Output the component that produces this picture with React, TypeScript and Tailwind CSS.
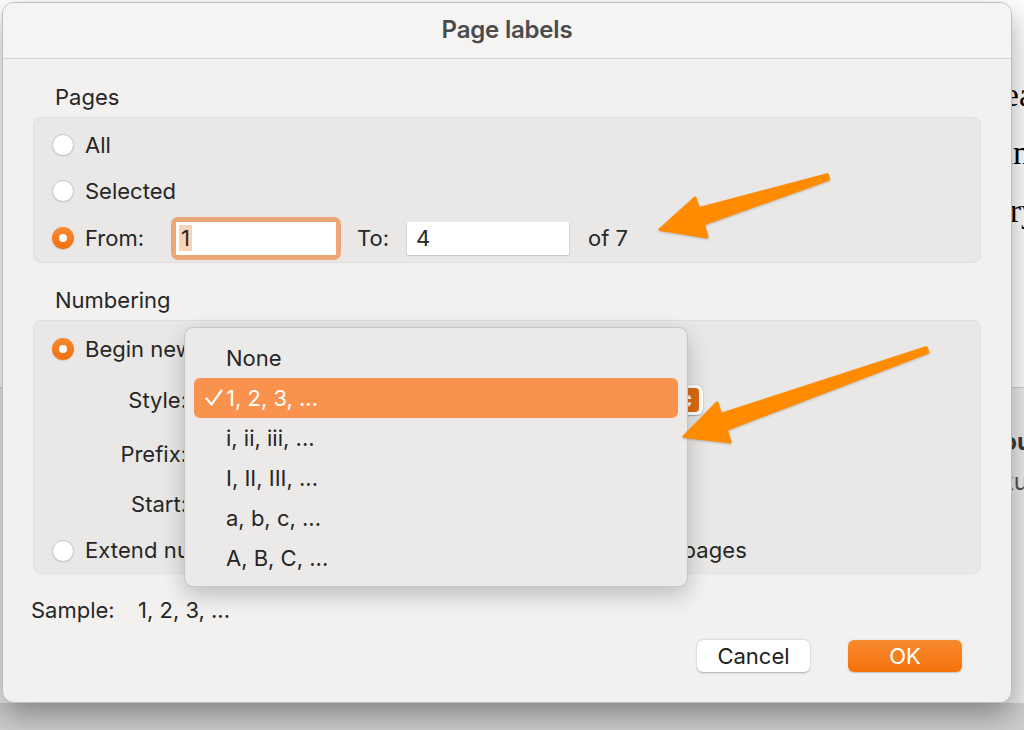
import React from "react";

function Radio({ on }: { on?: boolean }) {
  return on ? (
    <span className="flex h-[22px] w-[22px] shrink-0 items-center justify-center rounded-full bg-linear-to-b from-[#f7892f] to-[#f2700c] shadow-[0_0.5px_1px_rgba(0,0,0,0.25)]">
      <span className="h-[8px] w-[8px] rounded-full bg-white" />
    </span>
  ) : (
    <span className="h-[22px] w-[22px] shrink-0 rounded-full border border-[#c9c9c9] bg-white shadow-[0_0.5px_1px_rgba(0,0,0,0.12)]" />
  );
}

const items = ["None", "1, 2, 3, ...", "i, ii, iii, ...", "I, II, III, ...", "a, b, c, ...", "A, B, C, ..."];

export default function App() {
  return (
    <div className="relative h-[730px] w-[1024px] overflow-hidden bg-[#cdcdcd] text-[22px] text-[#262626] [font-family:Inter,'Noto_Sans',sans-serif]">
      {/* background document */}
      <div className="flex h-full flex-col">
        <div className="flex h-[388px] flex-col items-end border-b border-[#cfcfcf] bg-white pt-[66px] text-[34px] leading-[58px] text-black [font-family:'Liberation_Serif',serif]">
          <span className="mr-[-10px]">lea</span>
          <span className="mr-[-6px]">mn</span>
          <span className="mr-[-14px]">ary</span>
        </div>
        <div className="flex h-[315px] flex-col items-end bg-[#ececec] pt-[34px] text-[24px] font-bold leading-[40px] text-[#3a3a3a]">
          <span className="mr-[-8px]">pou</span>
          <span className="mr-[-4px] font-normal text-[#555]">ku</span>
        </div>
      </div>

      {/* dialog window */}
      <div className="absolute left-[2px] top-[2px] flex h-[701px] w-[1010px] flex-col overflow-hidden rounded-[12px] border border-[#bdbdbd] bg-[#f2f1f0] shadow-[0_12px_30px_rgba(0,0,0,0.35)]">
        <div className="flex h-[56px] shrink-0 items-center justify-center border-b border-[#d5d4d3] bg-[#f5f4f3] pb-[2px]">
          <span className="text-[24px] font-semibold tracking-[-0.2px] text-[#4b4b4b]">Page labels</span>
        </div>

        <div className="flex flex-col px-[30px]">
          <div className="mt-[24px] h-[28px] pl-[22px] leading-[28px]">Pages</div>
          <div className="mt-[6px] flex h-[146px] flex-col rounded-[8px] border border-[#e0dfde] bg-[#e9e8e7] pl-[18px] pt-[4px]">
            <div className="flex h-[46px] items-center gap-[11px]">
              <Radio />
              <span>All</span>
            </div>
            <div className="flex h-[46px] items-center gap-[11px]">
              <Radio />
              <span>Selected</span>
            </div>
            <div className="flex h-[48px] items-center">
              <Radio on />
              <span className="ml-[11px] w-[86px]">From:</span>
              <div className="rounded-[7px] bg-[#efa676] p-[5px]">
                <div className="flex h-[33px] w-[160px] items-center bg-white pl-[3px]">
                  <span className="bg-[#f8d3b8] px-[2px] leading-[26px]">1</span>
                </div>
              </div>
              <span className="ml-[16px] w-[50px]">To:</span>
              <div className="flex h-[33px] w-[162px] items-center bg-white pl-[9px] shadow-[0_0.5px_1.5px_rgba(0,0,0,0.35)]">4</div>
              <span className="ml-[19px]">of 7</span>
            </div>
          </div>

          <div className="mt-[23px] h-[28px] pl-[22px] leading-[28px]">Numbering</div>
          <div className="mt-[6px] flex h-[254px] flex-col rounded-[8px] border border-[#e0dfde] bg-[#e9e8e7] pt-[5px]">
            <div className="flex h-[46px] items-center gap-[11px] pl-[18px]">
              <Radio on />
              <span>Begin new section</span>
            </div>
            <div className="flex h-[56px] items-center">
              <span className="w-[153px] text-right">Style:</span>
              <div className="ml-[9px] flex h-[30px] w-[507px] items-center justify-end rounded-[6px] bg-white pr-[4px] shadow-[0_0.5px_1.5px_rgba(0,0,0,0.3)]">
                <span className="flex h-[24px] w-[19px] flex-col items-center justify-center rounded-[4px] bg-[#dc6a12] text-[9px] leading-[8px] text-white">
                  <span>▴</span>
                  <span>▾</span>
                </span>
              </div>
            </div>
            <div className="flex h-[52px] items-center">
              <span className="w-[153px] text-right">Prefix:</span>
              <div className="ml-[9px] h-[30px] w-[200px] bg-white shadow-[0_0.5px_1.5px_rgba(0,0,0,0.3)]" />
            </div>
            <div className="flex h-[48px] items-center">
              <span className="w-[153px] text-right">Start:</span>
              <div className="ml-[9px] h-[30px] w-[100px] bg-white shadow-[0_0.5px_1.5px_rgba(0,0,0,0.3)]" />
            </div>
            <div className="flex h-[45px] items-center gap-[11px] pl-[18px]">
              <Radio />
              <span className="whitespace-nowrap tracking-[0.1px]">Extend numbering used in preceding section to selected pages</span>
            </div>
          </div>

          <div className="-ml-[2px] mt-[22px] flex h-[28px] items-center">
            <span className="w-[107px]">Sample:</span>
            <span>1, 2, 3, ...</span>
          </div>

          <div className="mt-[16px] flex justify-end gap-[38px] pr-[19px]">
            <button className="flex h-[32px] w-[113px] items-center justify-center rounded-[6px] bg-white text-[#222] shadow-[0_0.5px_2px_rgba(0,0,0,0.3)]">
              Cancel
            </button>
            <button className="flex h-[32px] w-[114px] items-center justify-center rounded-[6px] bg-linear-to-b from-[#f78a2c] to-[#f57207] text-white shadow-[0_0.5px_1.5px_rgba(0,0,0,0.2)]">
              OK
            </button>
          </div>
        </div>
      </div>

      {/* popup menu */}
      <div className="absolute left-[184px] top-[327px] flex h-[260px] w-[504px] flex-col rounded-[9px] border border-[#c6c6c6] bg-[#ebeae9] px-[9px] pt-[10px] shadow-[0_8px_22px_rgba(0,0,0,0.22)]">
        {items.map((t, i) =>
          i === 1 ? (
            <div key={t} className="relative flex h-[40px] items-center rounded-[6px] bg-[#f8924d] pl-[32px] text-white">
              <svg className="absolute left-[11px] top-[11px]" width="18" height="18" viewBox="0 0 18 18">
                <path d="M1.5 9.5 L6.5 15.5 L16.5 1.5" fill="none" stroke="white" strokeWidth="2.2" strokeLinecap="round" strokeLinejoin="round" />
              </svg>
              {t}
            </div>
          ) : (
            <div key={t} className="flex h-[40px] items-center pl-[32px]">
              {t}
            </div>
          )
        )}
      </div>

      {/* annotation arrows */}
      <svg className="pointer-events-none absolute left-0 top-0 drop-shadow-[0_1px_1px_rgba(0,0,0,0.2)]" width="1024" height="730" viewBox="0 0 1024 730">
        <polygon
          points="827.3,174.6 698.6,208.7 695,198 660,229.5 707,237 703.4,224 828.7,179.4"
          fill="#ff8b00"
          stroke="#ff8b00"
          strokeWidth="3"
          strokeLinejoin="round"
        />
        <polygon
          points="926.2,347.7 720.8,414.5 717,403 684,436.5 730,442 726.2,429.5 927.8,352.3"
          fill="#ff8b00"
          stroke="#ff8b00"
          strokeWidth="3"
          strokeLinejoin="round"
        />
      </svg>
    </div>
  );
}
